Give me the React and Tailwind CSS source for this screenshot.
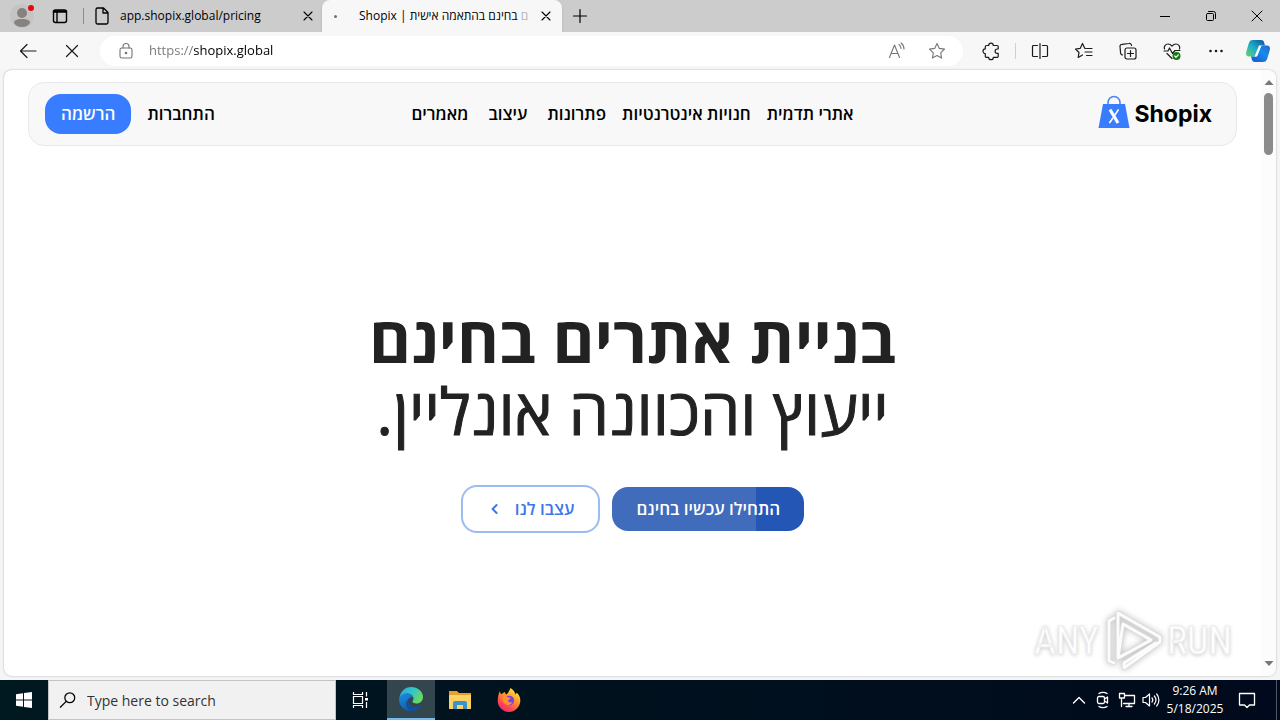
const stroke = { fill: "none", stroke: "currentColor", strokeLinecap: "round", strokeLinejoin: "round" };

function Icon({ size = 20, width = 1.1, className = "", children }) {
  return (
    <svg width={size} height={size} viewBox="0 0 20 20" strokeWidth={width} {...stroke} className={className} aria-hidden="true">
      {children}
    </svg>
  );
}

function IconButton({ label, className = "w-11", children }) {
  return (
    <button type="button" aria-label={label} className={`flex h-8 shrink-0 items-center justify-center ${className}`}>
      {children}
    </button>
  );
}

function CloseIcon() {
  return (
    <Icon size={16} width={1.4}>
      <path d="M5 5l10 10M15 5L5 15" />
    </Icon>
  );
}

function TabStrip() {
  return (
    <div className="flex h-8 items-stretch bg-[#cccccc] text-[12px] text-black">
      <IconButton label="Profile" className="w-11">
        <svg width="28" height="28" viewBox="0 0 28 28" aria-hidden="true">
          <circle cx="14" cy="14" r="12" fill="#c6c4c2" />
          <circle cx="14" cy="11" r="5" fill="#858280" />
          <path d="M6 21c0-3 3-4 8-4s8 1 8 4c-2 3-5 4-8 4s-6-1-8-4z" fill="#858280" />
          <circle cx="23" cy="6" r="3" fill="#e00b0b" />
        </svg>
      </IconButton>
      <IconButton label="Workspaces" className="w-8">
        <Icon width={1.4}>
          <rect x="3.5" y="4" width="13" height="12.500" rx="2" />
          <path d="M4 5.500h12" strokeWidth="2.400" />
          <path d="M7 6v10" />
        </Icon>
      </IconButton>
      <div className="my-2 ml-[7px] w-px bg-[#8c8c8c]" />
      <div className="flex w-[238px] items-center pl-2">
        <Icon width={1.3}>
          <path d="M5 2h6.500l4.500 4.500V16.500A1.500 1.500 0 0 1 14.500 18H5.500A1.500 1.500 0 0 1 4 16.500v-13A1.500 1.500 0 0 1 5.500 2zM11 2.500V7h4.500" />
        </Icon>
        <span className="ml-2 flex-1 truncate">app.shopix.global/pricing</span>
        <IconButton label="Close tab" className="w-7">
          <CloseIcon />
        </IconButton>
      </div>
      <div className="flex w-[240px] items-center rounded-t-lg bg-[#f7f7f7] shadow-sm">
        <span className="ml-3 size-[3px] rounded-full bg-[#707070]" />
        <span dir="rtl" className="ml-[22px] flex-1 overflow-hidden text-left whitespace-nowrap">
          <span className="text-[#b5b5b5]">ם</span> בחינם בהתאמה אישית | Shopix
        </span>
        <IconButton label="Close tab" className="w-8">
          <CloseIcon />
        </IconButton>
      </div>
      <IconButton label="New tab" className="w-9">
        <Icon width={1.2}>
          <path d="M10 3.500v13M3.500 10h13" />
        </Icon>
      </IconButton>
      <div className="flex-1" />
      <IconButton label="Minimize" className="w-[46px]">
        <svg width="10" height="10" className="text-black" aria-hidden="true">
          <path d="M0 5.500h10" stroke="currentColor" />
        </svg>
      </IconButton>
      <IconButton label="Restore" className="w-[46px]">
        <svg width="12" height="12" viewBox="0 0 12 12" {...stroke} aria-hidden="true">
          <rect x="1.500" y="3.500" width="7" height="7" rx="1" />
          <path d="M3.500 1.500h5a2 2 0 0 1 2 2v5" />
        </svg>
      </IconButton>
      <IconButton label="Close" className="w-[46px]">
        <svg width="12" height="12" viewBox="0 0 12 12" {...stroke} aria-hidden="true">
          <path d="M1 1l10 10M11 1L1 11" />
        </svg>
      </IconButton>
    </div>
  );
}

const starPath = "M10 2.500l2.300 4.900 5.200.7-3.800 3.700.9 5.300-4.600-2.500-4.600 2.500.9-5.300-3.800-3.700 5.200-.7z";

function Toolbar() {
  return (
    <div className="flex h-[38px] items-center bg-[#f7f7f7] pl-1.5 text-[#1b1b1b]">
      <IconButton label="Back">
        <Icon width={1.2}>
          <path d="M18 10H2.500M9 3.500L2.500 10 9 16.500" />
        </Icon>
      </IconButton>
      <IconButton label="Stop">
        <Icon width={1.2}>
          <path d="M4.500 4.500l11 11M15.500 4.500l-11 11" />
        </Icon>
      </IconButton>
      <div className="ml-1.5 flex h-[30px] flex-1 items-center rounded-full bg-white pr-1.5 pl-4 text-[#767676]">
        <Icon>
          <rect x="4" y="7" width="12" height="10" rx="1.800" />
          <path d="M7 7V5.500a3 3 0 0 1 6 0V7" />
          <circle cx="10" cy="12" r=".8" fill="currentColor" />
        </Icon>
        <span className="ml-[13px] flex-1 text-[13px]">
          <input
            aria-label="Address"
            defaultValue="https://shopix.global"
            className="block w-full bg-transparent bg-linear-to-r from-[#767676] from-[45px] to-black to-[45px] bg-clip-text text-transparent caret-black outline-none"
          />
        </span>
        <IconButton label="Read aloud" className="w-10">
          <Icon>
            <path d="M2.500 16.500L7.500 4l5 12.500M4.200 12.500h6.600M12 3.500c1.300 1 2 2.300 2 4M14 2c2 1.500 3 3.500 3 6" />
          </Icon>
        </IconButton>
        <IconButton label="Add to favorites" className="w-10">
          <Icon>
            <path d={starPath} />
          </Icon>
        </IconButton>
      </div>
      <IconButton label="Extensions" className="ml-1 w-12">
        <Icon width={1.2}>
          <path d="M5.500 4.500h2.200a2.300 2.300 0 0 1 4.600 0H16a1.200 1.200 0 0 1 1.200 1.200V8h-.9a2.200 2.200 0 0 0 0 4.400h.9v2.800a1.200 1.200 0 0 1-1.200 1.200h-3.700a2.300 2.300 0 0 1-4.600 0H5.500a1.200 1.200 0 0 1-1.200-1.200v-2.700a2.300 2.300 0 0 1 0-4.600V5.700a1.200 1.200 0 0 1 1.200-1.200z" />
        </Icon>
      </IconButton>
      <div className="h-4 w-px bg-[#d0d0d0]" />
      <IconButton label="Split screen" className="ml-0.5 w-11">
        <Icon width={1.2}>
          <path d="M7.500 4.500h-4a1 1 0 0 0-1 1v9a1 1 0 0 0 1 1h4M12.500 4.500h4a1 1 0 0 1 1 1v9a1 1 0 0 1-1 1h-4M10 2.500v15" />
        </Icon>
      </IconButton>
      <IconButton label="Favorites">
        <Icon width={1.2}>
          <path d="M11.500 7.500h-.6L8.500 2.500 6.300 7.300l-4.800.7L5 11.500l-.8 5L8.500 14M12.500 7.500H18M11 11h7M12.500 14.500H18" />
        </Icon>
      </IconButton>
      <IconButton label="Collections">
        <Icon width={1.2}>
          <rect x="7" y="7" width="11" height="11" rx="2" />
          <path d="M12.500 9.500v6M9.500 12.500h6M4.500 14A2.500 2.500 0 0 1 2.500 11L2 5.500A2 2 0 0 1 4 3.300l7-.8A2 2 0 0 1 13.500 4.500" />
        </Icon>
      </IconButton>
      <IconButton label="Browser essentials">
        <Icon width={1.2}>
          <path d="M2.500 8C1.500 5.500 3.500 3 6 3c2 0 3.200 1.200 4 2.200C10.800 4.200 12 3 14 3c2.500 0 4.500 2.500 3.500 5M2 10h4l1.500-3 3 5.500L13 9.500h5M5 12.500l5 5" />
          <circle cx="14.500" cy="15" r="4" fill="#107c10" stroke="none" />
          <path d="M12.700 15l1.300 1.300 2.300-2.500" stroke="white" />
        </Icon>
      </IconButton>
      <IconButton label="Settings and more">
        <Icon>
          <g fill="currentColor" stroke="none">
            <circle cx="4.500" cy="10" r="1.300" />
            <circle cx="10" cy="10" r="1.300" />
            <circle cx="15.500" cy="10" r="1.300" />
          </g>
        </Icon>
      </IconButton>
      <IconButton label="Copilot" className="w-[42px] pr-0.5">
        <svg width="26" height="24" viewBox="0 0 26 24" aria-hidden="true">
          <defs>
            <linearGradient id="cpA" x1="0" y1="1" x2="1" y2="0">
              <stop offset="0" stopColor="#6fd06a" />
              <stop offset=".45" stopColor="#1fb0c4" />
              <stop offset="1" stopColor="#0b4fa8" />
            </linearGradient>
            <linearGradient id="cpB" x1="0" y1="1" x2="1" y2="0">
              <stop offset="0" stopColor="#1b52d8" />
              <stop offset=".6" stopColor="#168ce8" />
              <stop offset="1" stopColor="#2c5fd4" />
            </linearGradient>
          </defs>
          <path d="M8 1h8c2 0 2.800 1 3.300 3l.7 2.500h-3c-2 0-2.500 1-3 2.500l-2 6c-.6 1.700-1.500 2.500-3 2.500H4c-2.500 0-3.500-2-2.800-4.500l2.500-8.500C4.500 2 5.500 1 8 1z" fill="url(#cpA)" />
          <path d="M18 23h-8c-2 0-2.800-1-3.300-3L6 17.500h4c2 0 2.500-1 3-2.500l2-6c.6-1.700 1.500-2.500 3-2.500h4c2.500 0 3.500 2 2.800 4.500l-2.500 8.500c-.8 2.500-1.800 3.500-4.300 3.500z" fill="url(#cpB)" />
          <path d="M14 6.500h2.500L12 17.500H9.500z" fill="#f4fbff" />
        </svg>
      </IconButton>
    </div>
  );
}

const links = [
  { text: "אתרי תדמית", space: "" },
  { text: "חנויות אינטרנטיות", space: "" },
  { text: "פתרונות", space: "" },
  { text: "עיצוב", space: "mx-1" },
  { text: "מאמרים", space: "" },
];

function SiteHeader() {
  return (
    <header className="mx-6 mt-3 grid h-16 grid-cols-[1fr_auto_1fr] items-center rounded-2xl border border-[#e8e8e8] bg-[#f8f8f8] px-4 text-[17px] leading-6 font-semibold text-black">
      <a href="#home" dir="ltr" className="mr-2 flex items-center gap-1 justify-self-start" aria-label="Shopix">
        <svg width="32" height="38" viewBox="0 0 32 38" aria-hidden="true">
          <path d="M10 10V7.500a6 6 0 0 1 12 0V10" fill="none" stroke="#4b84f5" strokeWidth="1.600" />
          <path d="M5 9h22l4.500 24H.5z" fill="#387dff" />
          <path d="M12 14.500L20 28" stroke="white" strokeWidth="3.200" />
          <path d="M20.500 14.500l-3.600 5.500M15 22.800L11.400 28" stroke="white" strokeWidth="1.600" />
        </svg>
        <span className="font-['Inter',sans-serif] text-[23px] leading-8 font-bold">Shopix</span>
      </a>
      <nav className="flex items-center gap-4">
        {links.map(({ text, space }) => (
          <a key={text} href="#section" className={`whitespace-nowrap ${space}`}>
            {text}
          </a>
        ))}
      </nav>
      <div className="flex items-center gap-4 justify-self-end">
        <a href="#login">התחברות</a>
        <a href="#signup" className="flex h-10 items-center rounded-2xl bg-[#387dff] px-4 text-white">
          הרשמה
        </a>
      </div>
    </header>
  );
}

function Hero() {
  return (
    <section className="flex flex-1 flex-col items-center justify-center pt-3.5">
      <h1 className="text-center text-[64px] leading-[72px] text-[#222222]">
        <strong className="block font-bold">בניית אתרים בחינם</strong>
        <span className="block font-normal [-webkit-text-stroke:1px_#222222]">ייעוץ והכוונה אונליין.</span>
      </h1>
      <div className="mt-[38px] flex items-center gap-3 text-[17px] leading-6 font-semibold">
        <a href="#start" className="flex h-11 items-center rounded-2xl bg-linear-to-r from-[#416bbb] from-75% to-[#2457b5] to-75% px-6 text-white">
          התחילו עכשיו בחינם
        </a>
        <a href="#design" className="flex h-12 items-center gap-3 rounded-2xl border-2 border-[#9cbcf0] px-6 text-[#3d77e8]">
          עצבו לנו
          <Icon size={16} width={2.4}>
            <path d="M12 5l-5 5 5 5" />
          </Icon>
        </a>
      </div>
    </section>
  );
}

function Watermark() {
  const word = "font-['Roboto_Condensed','Open_Sans_Condensed','Liberation_Sans_Narrow','Liberation_Sans',sans-serif] text-[38px] leading-none text-white [-webkit-text-stroke:1px_#eeeeee] [text-shadow:0_1px_4px_#bdbdbd]";
  return (
    <div className="pointer-events-none absolute right-11 bottom-0 flex items-center gap-1" aria-hidden="true">
      <span className={word}>ANY</span>
      <svg width="60" height="70" viewBox="3 0 60 70" className="drop-shadow-[0_0_3px_#bbbbbb]">
        <g fill="none" strokeLinejoin="round" strokeLinecap="round">
          <path d="M18 52V7l42 24v5L24 62v-5M18 7L60 31M9 55V15l5-3M9 55l5 2M24 57l32-20M18 52l33-18L23 18z" stroke="#dadada" strokeWidth="4.500" />
          <path d="M18 52V7l42 24v5L24 62v-5M18 7L60 31M9 55V15l5-3M9 55l5 2M24 57l32-20M18 52l33-18L23 18z" stroke="#fcfcfc" strokeWidth="2.800" />
        </g>
      </svg>
      <span className={word}>RUN</span>
    </div>
  );
}

function Scrollbar() {
  return (
    <div className="flex w-[15px] flex-col items-center bg-[#fcfcfc] py-2" aria-hidden="true">
      <svg width="10" height="8">
        <path d="M5 2l4.500 5h-9z" fill="#777" />
      </svg>
      <div className="mt-[7px] h-[62px] w-[9px] rounded-full bg-[#8b8b8b]" />
      <div className="flex-1" />
      <svg width="10" height="8">
        <path d="M5 6l4.500-5h-9z" fill="#777" />
      </svg>
    </div>
  );
}

function WindowsTaskbar() {
  return (
    <footer className="flex h-10 items-stretch bg-linear-to-r from-[#001820] to-[#000a1c] text-white">
      <button type="button" aria-label="Start" className="flex w-12 items-center justify-center">
        <svg width="16" height="16" viewBox="0 0 16 16" fill="white" aria-hidden="true">
          <path d="M0 2.200l7-1v6.300H0zM8 1l8-1v7.500H8zM0 8.500h7v6.300l-7-1zM8 8.500h8V16l-8-1z" />
        </svg>
      </button>
      <label className="flex w-72 items-center border border-[#c4c4c4] bg-[#f1f1f1] pl-2.5 text-black">
        <Icon width={1.4}>
          <circle cx="12" cy="7.500" r="5.500" />
          <path d="M8 11.500L1.500 18" />
        </Icon>
        <input type="text" aria-label="Search" placeholder="Type here to search" className="ml-2.5 w-full bg-transparent text-[14px] outline-none placeholder:text-[#333333]" />
      </label>
      <button type="button" aria-label="Task view" className="flex w-[51px] items-center justify-center pr-0.5">
        <svg width="18" height="18" viewBox="0 0 18 18" fill="none" stroke="white" strokeWidth="1.200" aria-hidden="true">
          <path d="M1.500 1v2.500h9V1M1.500 17v-2.500h9V17M1.500 5.500h9v7h-9zM14.500 1v4.500M14.500 11v6" />
          <rect x="13" y="7" width="3" height="2.500" fill="white" stroke="none" />
        </svg>
      </button>
      <button type="button" aria-label="Microsoft Edge" className="flex w-12 items-center justify-center border-b-2 border-[#76b9ed] bg-[#33464d]">
        <svg width="24" height="24" viewBox="0 0 24 24" aria-hidden="true">
          <defs>
            <linearGradient id="edTop" x1="0" y1="0" x2="1" y2=".5">
              <stop offset="0" stopColor="#27a8e5" />
              <stop offset=".55" stopColor="#35c5c6" />
              <stop offset="1" stopColor="#66db61" />
            </linearGradient>
            <linearGradient id="edBody" x1="0" y1="0" x2=".6" y2="1">
              <stop offset="0" stopColor="#1d8ede" />
              <stop offset="1" stopColor="#0b58a8" />
            </linearGradient>
          </defs>
          <path d="M.5 11C1.200 4.700 6 0 12 0c7 0 12 4.700 12 10 0 4-3 6.500-6.500 6.500-2.500 0-4-1-4-2 0-.8 1-1.200 1-3 0-2.500-2.500-5-6.500-5-4 0-6.500 2.300-7.500 4.500z" fill="url(#edTop)" />
          <path d="M.1 12C.5 8.500 3.500 6.500 8 6.500c3.500 0 6 2 6.400 4.300-1-1-5-1.300-5.400 3-.3 4 4 7.200 8.500 6.200 1.700-.3 3.200-1 4.200-1.500.5-.2.800.2.500.6C20 22.200 16.200 24 12 24 5 24-.3 18.500.1 12z" fill="url(#edBody)" />
          <path d="M9.500 12.500c-1.600 3.600 1 7.800 6 7.800 2.400 0 4.600-.9 6-1.700.7-.3 1 .2.600.7C20 22.200 16.200 24 12.800 24 7.500 23 4.500 15.500 9.500 12.500z" fill="#124fa0" />
        </svg>
      </button>
      <button type="button" aria-label="File Explorer" className="flex w-[50px] items-center justify-center">
        <svg width="22" height="20" viewBox="0 0 22 20" aria-hidden="true">
          <path d="M0 1h8l2 2h12v5H0z" fill="#e4a227" />
          <path d="M0 5h22v14H0z" fill="#fbd266" />
          <path d="M4 19v-6a2 2 0 0 1 2-2h10a2 2 0 0 1 2 2v6h-4v-4H8v4z" fill="#3b92c8" />
        </svg>
      </button>
      <button type="button" aria-label="Firefox" className="flex w-12 items-center justify-center">
        <svg width="24" height="24" viewBox="0 0 24 24" aria-hidden="true">
          <defs>
            <linearGradient id="ffx" x1=".8" y1="0" x2=".2" y2="1">
              <stop offset="0" stopColor="#fff044" />
              <stop offset=".4" stopColor="#ff9a28" />
              <stop offset=".75" stopColor="#ff4255" />
              <stop offset="1" stopColor="#e62875" />
            </linearGradient>
          </defs>
          <path d="M3 3c0 1.500.5 2.500 1.500 3.300C5.500 5.300 6.500 4.500 8 4c0 1 .5 2 1.500 2.500 1.500-1.500 3-4 4-6.500 3 2 4.500 4 5 6.500.8-.5 1-1.200 1-2C22.500 7 23.500 10 23.300 13 23 19 18 24 12 24S.7 19 .7 13C.7 9 1.700 5.500 3 3z" fill="url(#ffx)" />
          <circle cx="12.300" cy="12.500" r="4.800" fill="#7542e5" />
          <path d="M5.500 9c2-1.500 4-1 5.500.5 1 0 2 0 2.500.7-.5 1.300-1.700 1.500-2.500 2 0 2 2 2.800 4.500 1.800C14 17.500 10 18 7.500 15.500 5.500 13.500 5 11 5.500 9z" fill="#ff922b" />
        </svg>
      </button>
      <div className="flex-1" />
      <div className="flex items-center gap-1">
        <Icon width={1.4}>
          <path d="M4.500 13l5.500-5.500 5.500 5.500" />
        </Icon>
        <Icon width={1.3}>
          <rect x="4.500" y="6.500" width="7" height="7" rx="1.500" />
          <path d="M11.500 9l3-2v6l-3-2M6 3.500c2-1.600 6-1.600 8 0M6 16.500c2 1.600 6 1.600 8 0" />
        </Icon>
        <Icon width={1.3}>
          <path d="M7.500 5.500h10v8H6.500M12 13.500v3M9 16.500h6M2.500 3.500h5V8h-5zM4.500 8v8.500" />
        </Icon>
        <Icon width={1.2}>
          <path d="M2 7.500h2.500L8.500 4v12l-4-3.500H2zM11 8c1 1.200 1 2.800 0 4M13.300 6c2 2.400 2 5.600 0 8M15.700 4c3 3.500 3 8.500 0 12" />
        </Icon>
      </div>
      <div className="flex w-[68px] flex-col justify-center text-center text-[12px] leading-[18px]">
        <span>9:26 AM</span>
        <span>5/18/2025</span>
      </div>
      <button type="button" aria-label="Notifications" className="flex w-9 items-center justify-center">
        <Icon width={1.3}>
          <path d="M2.500 3.500h15v11.500h-5L10 17.500 7.500 15h-5z" />
        </Icon>
      </button>
      <div className="ml-[11px] w-1 border-l border-[#4c5661]" />
    </footer>
  );
}

export default function App() {
  return (
    <div className="flex min-h-screen flex-col bg-[#f3f5f7] font-['Open_Sans','Noto_Sans',sans-serif]">
      <TabStrip />
      <Toolbar />
      <main className="relative mx-1 mb-1 flex flex-1 overflow-hidden rounded-lg bg-white shadow-[0_0_2px_#a8a8a8]">
        <div dir="rtl" className="flex min-w-0 flex-1 flex-col">
          <SiteHeader />
          <Hero />
        </div>
        <Scrollbar />
        <Watermark />
      </main>
      <WindowsTaskbar />
    </div>
  );
}
